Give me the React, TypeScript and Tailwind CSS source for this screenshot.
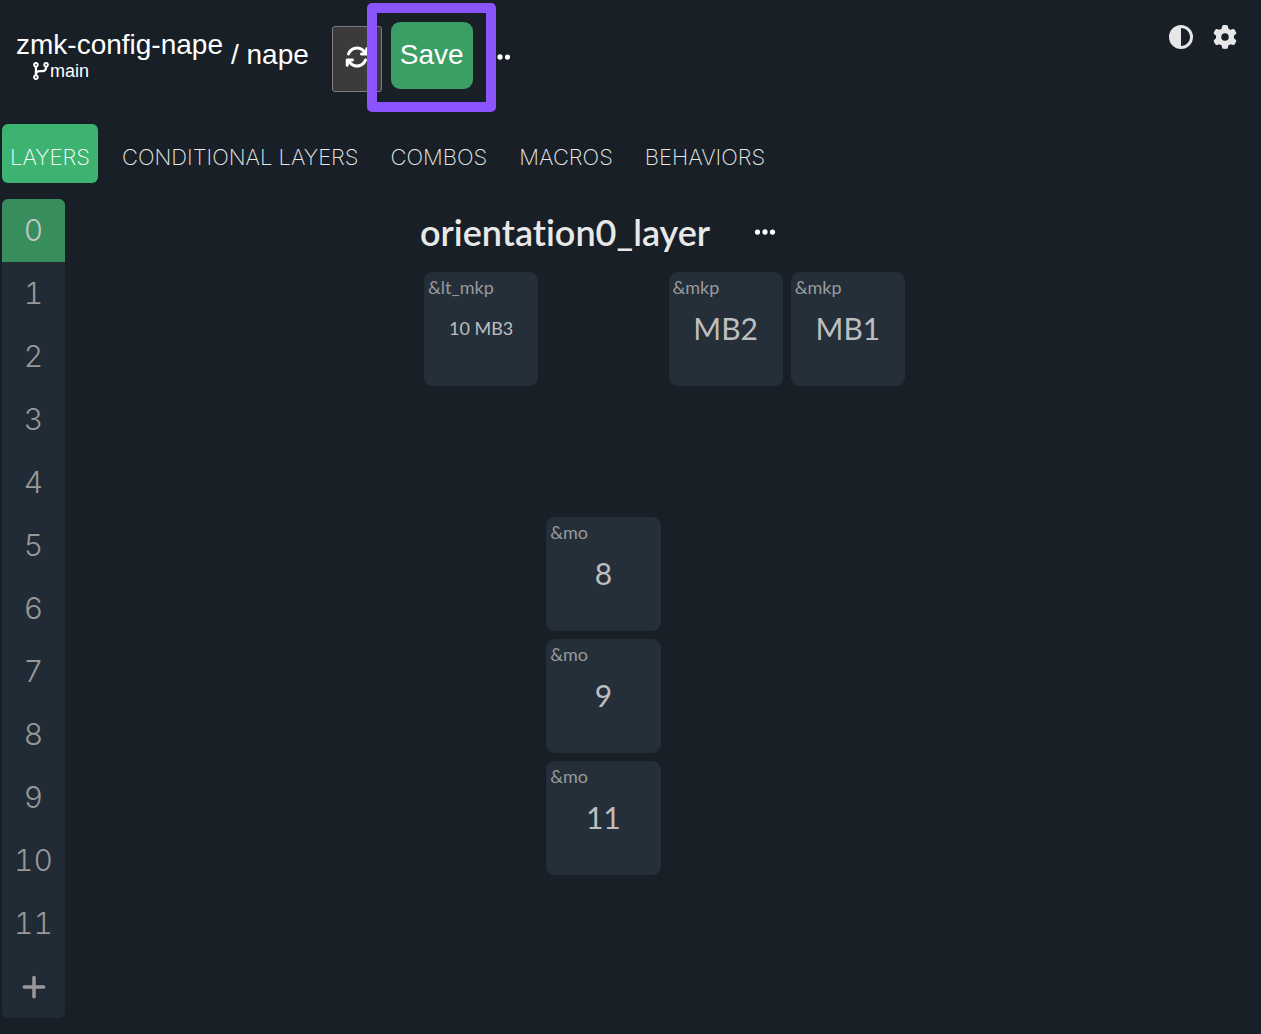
// App.tsx

/**
 * Keymap editor: header with repo info, section tabs, layer list and key grid
 */

import React, { useState } from "react";
import {
  FaArrowsRotate,
  FaCircleHalfStroke,
  FaCodeBranch,
  FaEllipsis,
  FaGear,
  FaPlus,
} from "react-icons/fa6";

interface KeyBinding {
  behavior: string;
  value: string;
  position: string;
  small?: boolean;
}

const TABS = ["LAYERS", "CONDITIONAL LAYERS", "COMBOS", "MACROS", "BEHAVIORS"];

const LAYERS = ["0", "1", "2", "3", "4", "5", "6", "7", "8", "9", "10", "11"];

const KEYS: KeyBinding[] = [
  {
    behavior: "&lt_mkp",
    value: "10 MB3",
    position: "col-start-1 row-start-1",
    small: true,
  },
  { behavior: "&mkp", value: "MB2", position: "col-start-3 row-start-1" },
  { behavior: "&mkp", value: "MB1", position: "col-start-4 row-start-1" },
  { behavior: "&mo", value: "8", position: "col-start-2 row-start-3" },
  { behavior: "&mo", value: "9", position: "col-start-2 row-start-4" },
  { behavior: "&mo", value: "11", position: "col-start-2 row-start-5" },
];

function Header() {
  return (
    <header className="flex items-start justify-between pl-4 pr-6 pt-[22px] pb-8 font-['Liberation_Sans',sans-serif] text-white">
      <div className="flex items-start">
        {/* Repository and branch */}
        <div className="pt-2">
          <div className="text-[28px] leading-[30px]">zmk-config-nape</div>
          <div className="flex items-center pl-4 text-lg leading-[22px]">
            <FaCodeBranch size={18} />
            main
          </div>
        </div>
        <div className="pl-2 pt-[18px] text-[28px] leading-[30px]">/ nape</div>

        {/* Actions */}
        <button
          type="button"
          aria-label="Refresh"
          className="ml-[23px] mt-1 flex h-[66px] w-[50px] items-center justify-center rounded-[3px] border border-[#7d7d7d] bg-[#3b3b3b] pb-1"
        >
          <FaArrowsRotate size={24} />
        </button>
        <div className="relative ml-[9px]">
          <button
            type="button"
            className="h-[67px] rounded-[9px] bg-[#3a9e65] px-[9px] pb-0.5 text-[28px]"
          >
            Save
          </button>
          <div className="pointer-events-none absolute -left-6 -right-[23px] -top-[19px] -bottom-[23px] rounded-[5px] border-10 border-[#8c54ff]" />
        </div>
        <button
          type="button"
          aria-label="More actions"
          className="ml-[15px] mt-[23px]"
        >
          <FaEllipsis size={24} />
        </button>
      </div>

      <div className="flex gap-5 pt-[3px] text-[#e6e6e6]">
        <button type="button" aria-label="Toggle theme">
          <FaCircleHalfStroke size={24} />
        </button>
        <button type="button" aria-label="Settings">
          <FaGear size={24} />
        </button>
      </div>
    </header>
  );
}

function LayerList({
  active,
  onSelect,
}: {
  active: string;
  onSelect: (layer: string) => void;
}) {
  return (
    <aside className="flex w-[63px] shrink-0 flex-col overflow-hidden rounded-md bg-[#202b35] font-[Inter,sans-serif] text-[#989898]">
      {LAYERS.map((layer) => (
        <button
          key={layer}
          type="button"
          onClick={() => onSelect(layer)}
          className={`h-[63px] text-[30px] font-light tabular-nums ${
            layer === active ? "bg-[#378d5c] text-[#c3c6c4]" : ""
          }`}
        >
          {layer}
        </button>
      ))}
      <button
        type="button"
        aria-label="Add layer"
        className="flex h-[63px] items-center justify-center"
      >
        <FaPlus size={28} />
      </button>
    </aside>
  );
}

function Key({ binding }: { binding: KeyBinding }) {
  return (
    <button
      type="button"
      className={`flex aspect-square flex-col items-start rounded-lg border border-[#222d37] bg-[#252f39] px-[3px] pt-[3px] text-[#bebebe] ${binding.position}`}
    >
      <span className="text-lg leading-[22px] text-[#979a9d]">
        {binding.behavior}
      </span>
      <span
        className={`w-full pt-3 text-center ${
          binding.small ? "text-lg leading-9" : "text-[30px] leading-9"
        }`}
      >
        {binding.value}
      </span>
    </button>
  );
}

export default function App() {
  const [tab, setTab] = useState("LAYERS");
  const [layer, setLayer] = useState("0");

  return (
    <div className="min-h-screen bg-[#181f26] font-[Lato,sans-serif]">
      <Header />

      {/* Section tabs */}
      <nav className="flex gap-4 px-0.5 font-[Inter,sans-serif]">
        {TABS.map((name) => (
          <button
            key={name}
            type="button"
            onClick={() => setTab(name)}
            className={`h-[59px] rounded-md px-2 pt-2 text-[22px] font-extralight ${
              name === tab ? "bg-[#3cb371] text-white" : "text-[#e8e8e8]"
            }`}
          >
            {name}
          </button>
        ))}
      </nav>

      <div className="flex px-0.5 pt-4">
        <LayerList active={layer} onSelect={setLayer} />

        {/* Keymap */}
        <main className="flex flex-1 flex-col items-center pl-[5px]">
          <div className="w-[481px]">
            <div className="flex h-[73px] items-center gap-[43px] pb-2">
              <h1 className="-ml-1 text-4xl font-semibold text-[#e8e8e8] [font-variant-ligatures:none]">
                orientation0_layer
              </h1>
              <button
                type="button"
                aria-label="Layer options"
                className="text-white"
              >
                <FaEllipsis size={24} />
              </button>
            </div>
            <div className="grid grid-cols-4 gap-2">
              <div className="col-start-1 row-start-2 aspect-square" />
              {KEYS.map((binding) => (
                <Key key={binding.position} binding={binding} />
              ))}
            </div>
          </div>
        </main>
      </div>
    </div>
  );
}
